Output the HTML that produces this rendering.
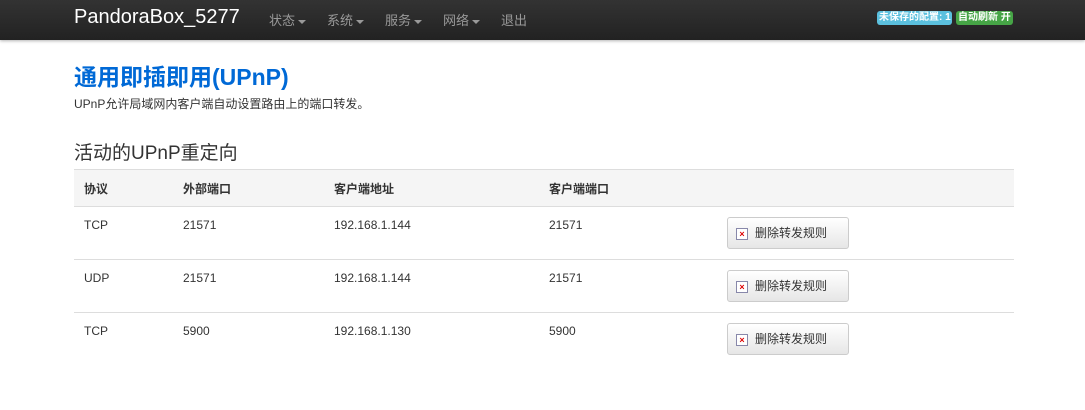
<!DOCTYPE html>
<html><head><meta charset="utf-8"><style>
body{margin:0;width:1085px;height:410px;background:#fff;font-family:"Liberation Sans","Noto Sans CJK SC",sans-serif;color:#333;overflow:hidden;position:relative}
.nav{position:absolute;left:0;top:0;width:1085px;height:40px;background:linear-gradient(#333,#222);box-shadow:0 1px 3px rgba(0,0,0,.3)}
.brand{position:absolute;left:74px;top:6px;font-size:20px;color:#fff}
.menu{position:absolute;top:10px;font-size:13px;color:#999}
.caret{display:inline-block;border-left:4px solid transparent;border-right:4px solid transparent;border-top:4px solid #999;vertical-align:middle;margin-left:3px}
.badge{position:absolute;top:11px;height:14px;font-size:10px;line-height:14px;color:#fff;font-weight:bold;border-radius:3px;padding:0 2px}
h1{position:absolute;left:74px;top:58px;margin:0;font-size:23px;color:#0069d6;font-weight:bold}
.desc{position:absolute;left:74px;top:95px;font-size:12px}
h2{position:absolute;left:74px;top:138px;margin:0;font-size:19px;font-weight:normal}
table{position:absolute;left:74px;top:169px;width:940px;border-collapse:collapse;font-size:12px}
th{background:#f5f5f5;text-align:left;height:36px;padding:0 10px;border-top:1px solid #ddd;font-weight:bold}
td{height:53px;padding:0 10px;border-top:1px solid #ddd;vertical-align:top;padding-top:11px;box-sizing:border-box}
.btn{display:inline-block;width:122px;height:32px;border:1px solid #ccc;border-radius:3px;background:linear-gradient(#fff,#e6e6e6);box-sizing:border-box;font-size:12px;line-height:30px;margin-top:-1px;margin-left:0}
.ic{display:inline-block;width:10px;height:10px;border:1px solid #88a;background:#fff;color:#d00;font-size:9px;line-height:10px;text-align:center;vertical-align:middle;margin:0 7px 0 8px;font-weight:bold}
</style></head><body>
<div class="nav">
<div class="brand">PandoraBox_5277</div>
<div class="menu" style="left:269px">状态<span class="caret"></span></div>
<div class="menu" style="left:327px">系统<span class="caret"></span></div>
<div class="menu" style="left:385px">服务<span class="caret"></span></div>
<div class="menu" style="left:443px">网络<span class="caret"></span></div>
<div class="menu" style="left:501px">退出</div>
<div class="badge" style="left:877px;background:#5bc0de;padding-right:1px">未保存的配置: 1</div>
<div class="badge" style="left:956px;background:#46a546">自动刷新 开</div>
</div>
<h1>通用即插即用(UPnP)</h1>
<div class="desc">UPnP允许局域网内客户端自动设置路由上的端口转发。</div>
<h2>活动的UPnP重定向</h2>
<table>
<tr><th style="width:79px">协议</th><th style="width:131px">外部端口</th><th style="width:195px">客户端地址</th><th style="width:158px">客户端端口</th><th></th></tr>
<tr><td>TCP</td><td>21571</td><td>192.168.1.144</td><td>21571</td><td><span class="btn"><span class="ic">×</span>删除转发规则</span></td></tr>
<tr><td>UDP</td><td>21571</td><td>192.168.1.144</td><td>21571</td><td><span class="btn"><span class="ic">×</span>删除转发规则</span></td></tr>
<tr><td>TCP</td><td>5900</td><td>192.168.1.130</td><td>5900</td><td><span class="btn"><span class="ic">×</span>删除转发规则</span></td></tr>
</table>
</body></html>
